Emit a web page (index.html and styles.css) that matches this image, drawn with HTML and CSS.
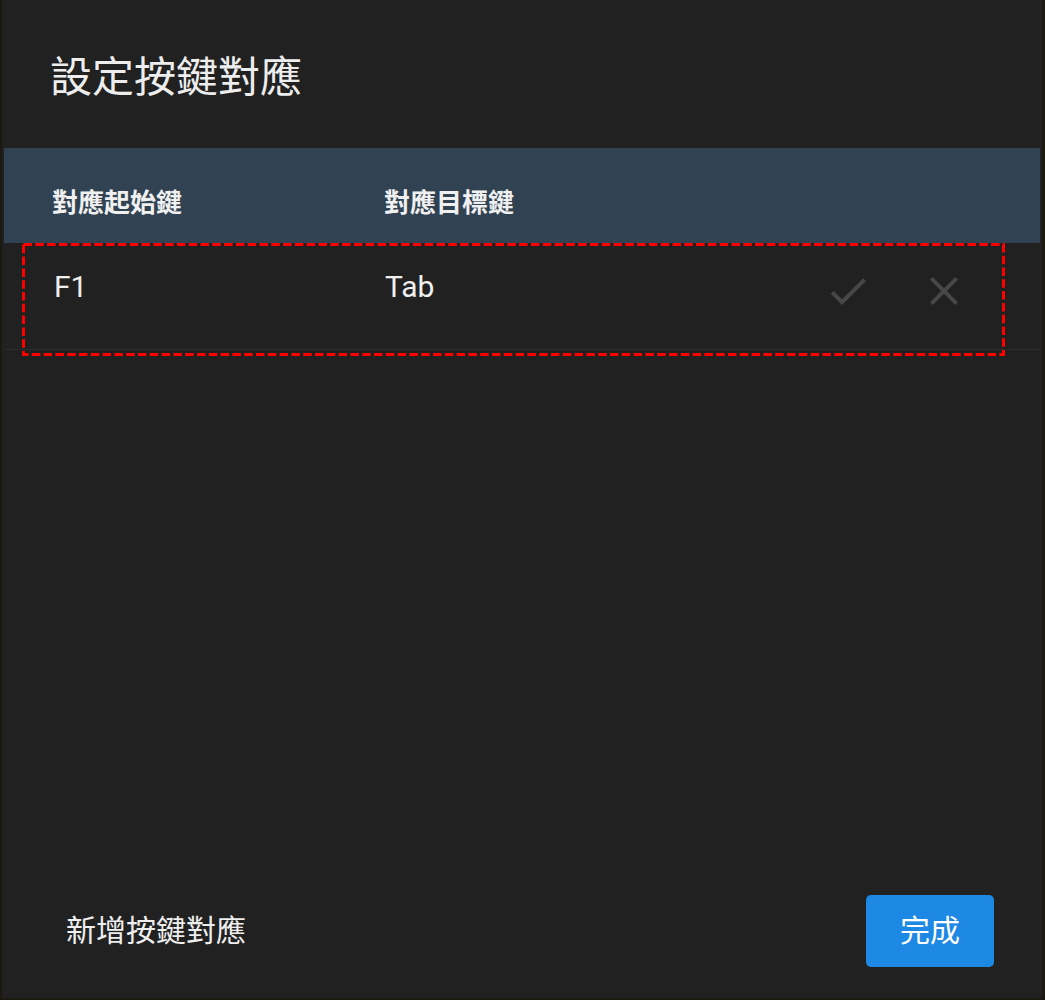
FILE: index.html
```html
<!DOCTYPE html>
<html lang="zh-Hant">
<head>
<meta charset="utf-8">
<title>設定按鍵對應</title>
<link rel="stylesheet" href="styles.css">
</head>
<body>
<div class="dialog">
  <h1 class="title">設定按鍵對應</h1>
  <div class="table">
    <div class="thead">
      <div class="th">對應起始鍵</div>
      <div class="th">對應目標鍵</div>
    </div>
    <div class="row">
      <div class="cell">F1</div>
      <div class="cell">Tab</div>
      <div class="actions">
        <span class="icon">
          <svg viewBox="0 0 24 24" width="48" height="48"><path d="M9 16.17L4.83 12l-1.42 1.41L9 19 21 7l-1.41-1.41z"/></svg>
        </span>
        <span class="icon">
          <svg viewBox="0 0 24 24" width="48" height="48"><path d="M19 6.41L17.59 5 12 10.59 6.41 5 5 6.41 10.59 12 5 17.59 6.41 19 12 13.41 17.59 19 19 17.59 13.41 12z"/></svg>
        </span>
      </div>
      <svg class="highlight" width="983" height="113" viewBox="0 0 983 113"><rect x="1.5" y="1.5" width="980" height="110" fill="none" stroke="#ff0000" stroke-width="3" stroke-dasharray="8.5 3.3"/></svg>
    </div>
  </div>
  <div class="footer">
    <button class="btn-text">新增按鍵對應</button>
    <button class="btn-primary">完成</button>
  </div>
</div>
</body>
</html>
```
FILE: styles.css
```css
html, body {
  margin: 0;
  padding: 0;
  background: #1c1910;
}
body {
  font-family: Roboto, "Noto Sans CJK TC", "Noto Sans", sans-serif;
  color: #ececec;
}
.dialog {
  margin-left: 2px;
  width: 1036px;
  height: 998px;
  padding: 0 2px;
  background: #212121;
  display: flex;
  flex-direction: column;
}
.title {
  margin: 0;
  padding: 57px 0 49px 46px;
  font-size: 42px;
  line-height: 42px;
  font-weight: 400;
  color: #ededed;
}
.thead {
  display: grid;
  grid-template-columns: 332px 1fr;
  padding: 42px 48px 27px 48px;
  background: #314352;
}
.th {
  font-size: 26px;
  line-height: 26px;
  font-weight: 700;
  color: #f0f0f0;
}
.row {
  position: relative;
  display: grid;
  grid-template-columns: 331px 1fr auto;
  align-items: start;
  padding: 24px 72px 34px 50px;
  border-bottom: 1px solid #2c2c2c;
}
.cell {
  font-size: 30px;
  line-height: 40px;
  color: #efefef;
}
.actions {
  display: flex;
  gap: 48px;
}
.icon {
  display: block;
  width: 48px;
  height: 48px;
}
.icon svg {
  display: block;
  fill: #474747;
}
.highlight {
  position: absolute;
  left: 18px;
  top: 0;
}
.footer {
  margin-top: auto;
  display: flex;
  justify-content: space-between;
  align-items: center;
  padding: 0 46px 31px 44px;
}
.btn-text, .btn-primary {
  font-family: Roboto, "Noto Sans CJK TC", sans-serif;
  font-size: 30px;
  line-height: 72px;
  height: 72px;
  border: none;
  cursor: pointer;
}
.btn-text {
  background: transparent;
  color: #eeeeee;
  padding: 0 18px;
}
.btn-primary {
  width: 128px;
  padding: 0;
  background: #1e88e5;
  color: #ffffff;
  border-radius: 5px;
}
```
